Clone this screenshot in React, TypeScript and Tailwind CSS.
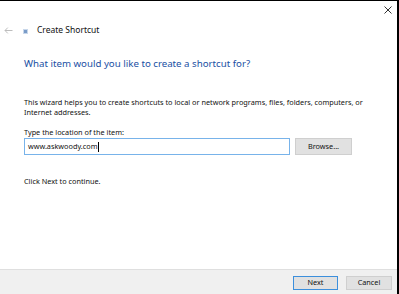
import React from 'react';

const font = { fontFamily: '"Noto Sans", "Open Sans", sans-serif' };

const App: React.FC = () => {
  return (
    <div
      className="w-[399px] h-[294px] bg-white border-t border-black border-r-2 flex flex-col text-black overflow-hidden"
      style={font}
    >
      {/* caption */}
      <div className="h-[23px] flex justify-end pr-[5px] pt-[5px]">
        <svg width="8" height="8" viewBox="0 0 8 8" className="text-[#333]">
          <path d="M0.5 0.5 L7.5 7.5 M7.5 0.5 L0.5 7.5" stroke="currentColor" strokeWidth="1" />
        </svg>
      </div>

      {/* title row */}
      <div className="h-[12px] flex items-center pl-[4px]">
        <svg width="9" height="7" viewBox="0 0 9 7" className="text-[#bdbdbd]">
          <path d="M8.5 3.5 H1 M3.8 0.6 L1 3.5 L3.8 6.4" stroke="currentColor" strokeWidth="1" fill="none" />
        </svg>
        <div className="ml-[10px] w-[5px] h-[5px] mt-[3px] bg-[#7a9cc8] border border-[#c8d7ea]" />
        <span className="ml-[9px] text-[8.5px] leading-none text-[#111]">Create Shortcut</span>
      </div>

      <div className="px-[24px] flex flex-col">
        <h1 className="mt-[21px] text-[9.7px] leading-[14px] text-[#1a4fa3]">
          What item would you like to create a shortcut for?
        </h1>

        <p className="mt-[26px] text-[7.3px] leading-[10px] text-[#111]">
          This wizard helps you to create shortcuts to local or network programs, files, folders, computers, or
          <br />
          Internet addresses.
        </p>

        <label className="mt-[10px] text-[7.3px] leading-[10px] text-[#111]">
          Type the location of the item:
        </label>

        <div className="mt-[1px] flex items-center gap-[5px]">
          <div className="w-[266px] h-[17px] border border-[#78b3ea] flex items-center pl-[3px] text-[7.3px] text-[#111]">
            www.askwoody.com<span className="w-px h-[10px] bg-black" />
          </div>
          <button className="w-[57px] h-[17px] bg-[#e1e1e1] border border-[#cfcfcf] text-[7.3px] text-[#111]">
            Browse...
          </button>
        </div>

        <p className="mt-[21px] text-[7.3px] leading-[10px] text-[#111]">Click Next to continue.</p>
      </div>

      {/* footer */}
      <div className="mt-auto h-[25px] bg-[#f0f0f0] border-t border-[#dfdfdf] flex items-start justify-end gap-[8px] pr-[5px] pt-[6px]">
        <button className="w-[45px] h-[14px] bg-[#e1e1e1] border border-[#3c8fdc] text-[7.3px] leading-none text-[#111]">
          Next
        </button>
        <button className="w-[46px] h-[14px] bg-[#e1e1e1] border border-[#cfcfcf] text-[7.3px] leading-none text-[#111]">
          Cancel
        </button>
      </div>
    </div>
  );
};

export default App;
